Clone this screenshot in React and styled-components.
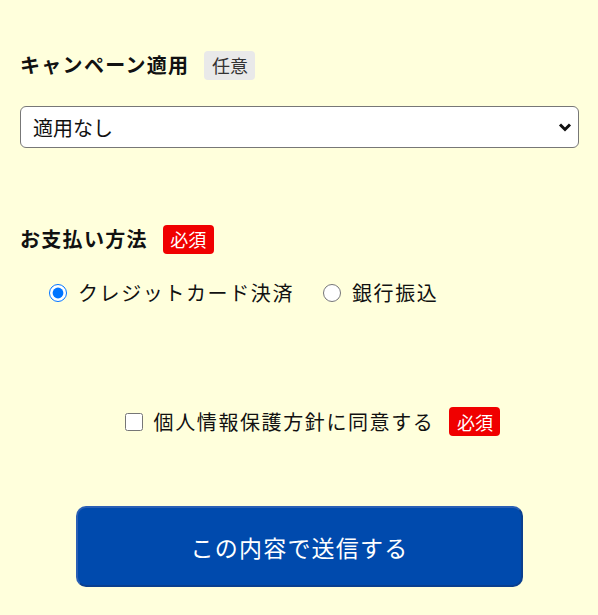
import React, { useState } from 'react';
import styled, { createGlobalStyle } from 'styled-components';

const GlobalStyle = createGlobalStyle`
  html, body {
    margin: 0;
    padding: 0;
    background-color: #ffffdc;
  }
  body {
    font-family: "Noto Sans CJK JP", "Noto Sans", sans-serif;
    color: #111;
  }
`;

const Page = styled.form`
  min-height: 615px;
  box-sizing: border-box;
  padding: 50px 19px 0 20px;
`;

const Field = styled.div`
  margin-bottom: ${(p) => p.$gap || 0}px;
`;

const LabelRow = styled.div`
  display: flex;
  align-items: center;
  gap: 15px;
  height: 30px;
`;

const Label = styled.span`
  font-size: 20px;
  font-weight: 700;
  letter-spacing: 1.3px;
  line-height: 1;
`;

const Badge = styled.span`
  display: inline-flex;
  align-items: center;
  justify-content: center;
  width: 51px;
  height: 29px;
  border-radius: 4px;
  font-size: 18px;
  line-height: 1;
  background-color: ${(p) => (p.$required ? '#f00000' : '#e9e9e9')};
  color: ${(p) => (p.$required ? '#fff' : '#333')};
`;

const SelectWrap = styled.div`
  position: relative;
  margin-top: 26px;
`;

const Select = styled.select`
  appearance: none;
  width: 100%;
  height: 42px;
  box-sizing: border-box;
  border: 1.5px solid #777;
  border-radius: 6px;
  background: #fff;
  padding: 0 12px;
  font-family: inherit;
  font-size: 20px;
  color: #111;
  outline: none;
`;

const Chevron = styled.svg`
  position: absolute;
  right: 7px;
  top: 16px;
  pointer-events: none;
`;

const RadioRow = styled.div`
  display: flex;
  align-items: center;
  gap: 29px;
  margin-top: 27px;
  padding-left: 29px;
`;

const Option = styled.label`
  display: flex;
  align-items: center;
  gap: 11px;
  font-size: 20px;
  letter-spacing: 1.6px;
  line-height: 1.2;
  cursor: pointer;
`;

const Radio = styled.input`
  width: 18px;
  height: 18px;
  margin: 0;
`;

const AgreeRow = styled.div`
  display: flex;
  align-items: center;
  justify-content: center;
  gap: 15px;
  margin-top: 102px;
  padding-left: 26px;
`;

const Checkbox = styled.input`
  width: 18px;
  height: 18px;
  margin: 0;
`;

const SubmitButton = styled.button`
  display: block;
  width: 447px;
  height: 81px;
  margin: 70px auto 0;
  border: 2px solid #0a3f8f;
  border-top-color: #2a5fb5;
  border-left-color: #2a5fb5;
  border-radius: 10px;
  background-color: #004aad;
  color: #fff;
  font-family: inherit;
  font-size: 23px;
  letter-spacing: 1.2px;
  cursor: pointer;
`;

const App = () => {
  const [pay, setPay] = useState('card');
  const [agree, setAgree] = useState(false);

  return (
    <>
      <GlobalStyle />
      <Page onSubmit={(e) => e.preventDefault()}>
        <Field $gap={76}>
          <LabelRow>
            <Label>キャンペーン適用</Label>
            <Badge>任意</Badge>
          </LabelRow>
          <SelectWrap>
            <Select defaultValue="none">
              <option value="none">適用なし</option>
              <option value="spring">春のキャンペーン</option>
            </Select>
            <Chevron width="14" height="10" viewBox="0 0 14 10">
              <path d="M2 2.5 L7 7.5 L12 2.5" fill="none" stroke="#111" strokeWidth="3" />
            </Chevron>
          </SelectWrap>
        </Field>

        <Field>
          <LabelRow>
            <Label>お支払い方法</Label>
            <Badge $required>必須</Badge>
          </LabelRow>
          <RadioRow>
            <Option>
              <Radio
                type="radio"
                name="pay"
                checked={pay === 'card'}
                onChange={() => setPay('card')}
              />
              クレジットカード決済
            </Option>
            <Option>
              <Radio
                type="radio"
                name="pay"
                checked={pay === 'bank'}
                onChange={() => setPay('bank')}
              />
              銀行振込
            </Option>
          </RadioRow>
        </Field>

        <AgreeRow>
          <Option>
            <Checkbox
              type="checkbox"
              checked={agree}
              onChange={(e) => setAgree(e.target.checked)}
            />
            個人情報保護方針に同意する
          </Option>
          <Badge $required>必須</Badge>
        </AgreeRow>

        <SubmitButton type="submit">この内容で送信する</SubmitButton>
      </Page>
    </>
  );
};

export default App;
